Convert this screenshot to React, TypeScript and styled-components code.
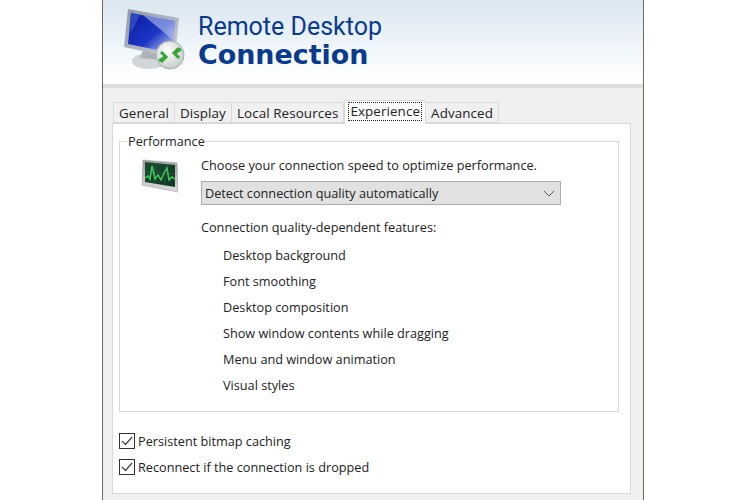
import styled, { createGlobalStyle } from 'styled-components'

const GlobalStyle = createGlobalStyle`
  html, body {
    margin: 0;
    padding: 0;
    background: #fff;
    overflow: hidden;
  }
  body {
    font-family: "Open Sans", "Liberation Sans", sans-serif;
    font-size: 12.7px;
    color: #222;
  }
`

const Page = styled.div`
  width: 745px;
  height: 500px;
  display: flex;
  justify-content: center;
  overflow: hidden;
`

const Window = styled.div`
  box-sizing: border-box;
  width: 542px;
  height: 500px;
  margin-left: 1px;
  border-left: 1px solid #6f6a5c;
  border-right: 1px solid #6f6a5c;
  background: #f0f0f0;
  display: flex;
  flex-direction: column;
`

const Banner = styled.header`
  box-sizing: border-box;
  height: 88px;
  flex: none;
  padding: 6px 0 0 20px;
  display: flex;
  gap: 11px;
  background: linear-gradient(#dbe6f0 0%, #e9f1f7 40%, #f8fbfd 75%, #ffffff 96%);
  border-bottom: 4px solid #dedede;
`

const BannerTitle = styled.div`
  display: flex;
  flex-direction: column;
  padding-top: 6px;
  color: #0a3a8e;
`

const TitleLight = styled.span`
  font-family: Roboto, sans-serif;
  font-size: 25px;
  line-height: 29px;
`

const TitleBold = styled.span`
  font-family: "DejaVu Sans", sans-serif;
  font-weight: 700;
  font-size: 26.9px;
  line-height: 28px;
`

const Body = styled.div`
  flex: 1;
  padding: 14px 12px 6px 9px;
  display: flex;
  flex-direction: column;
`

const TabBar = styled.div`
  display: flex;
  align-items: flex-end;
  height: 21px;
  padding-left: 1px;
  position: relative;
  z-index: 1;
  font-size: 13.4px;
  letter-spacing: 0.1px;
`

const Tab = styled.div<{ $active?: boolean }>`
  box-sizing: border-box;
  height: ${({ $active }) => ($active ? '24px' : '21px')};
  margin-bottom: ${({ $active }) => ($active ? '-1px' : '0')};
  padding: ${({ $active }) => ($active ? '0 3px' : '0 5px')};
  display: flex;
  align-items: ${({ $active }) => ($active ? 'flex-start' : 'center')};
  background: ${({ $active }) => ($active ? '#fff' : '#f0f0f0')};
  border: 1px solid #d9d9d9;
  border-left-width: ${({ $active }) => ($active ? '1px' : '0')};
  border-bottom-width: ${({ $active }) => ($active ? '0' : '1px')};
  white-space: nowrap;
  &:first-child {
    border-left-width: 1px;
  }
`

const TabFocus = styled.span`
  padding: 0 2px;
  margin-top: 1px;
  height: 19px;
  line-height: 18px;
  outline: 1px dotted #222;
  outline-offset: -1px;
`

const Panel = styled.div`
  box-sizing: border-box;
  flex: 1;
  background: #fff;
  border: 1px solid #d9d9d9;
  padding: 9px 11px 0 6px;
  display: flex;
  flex-direction: column;
`

const Group = styled.fieldset`
  box-sizing: border-box;
  margin: 0;
  height: 279px;
  flex: none;
  border: 1px solid #d9d9d9;
  padding: 0 0 0 20px;
  display: flex;
  gap: 23px;
`

const Legend = styled.legend`
  padding: 0 1px;
  margin-left: -13px;
  line-height: 16px;
`

const Icon = styled.svg`
  flex: none;
  margin-top: 8px;
`

const GroupBody = styled.div`
  display: flex;
  flex-direction: column;
  padding-top: 7px;
`

const Line = styled.div`
  line-height: 18px;
  white-space: nowrap;
`

const Select = styled.div`
  box-sizing: border-box;
  width: 360px;
  height: 24px;
  margin: 7px 0 13px;
  padding: 0 5px 0 3px;
  display: flex;
  align-items: center;
  justify-content: space-between;
  background: #e1e1e1;
  border: 1px solid #adadad;
`

const FeatureList = styled.ul`
  list-style: none;
  margin: 10px 0 0;
  padding: 0 0 0 22px;
  display: flex;
  flex-direction: column;
  gap: 8px;
`

const Feature = styled.li`
  line-height: 18px;
`

const Checks = styled.div`
  margin-top: 21px;
  display: flex;
  flex-direction: column;
  gap: 10px;
`

const CheckRow = styled.div`
  display: flex;
  align-items: center;
  gap: 3px;
  height: 16px;
  white-space: nowrap;
`

const CheckBox = styled.span`
  box-sizing: border-box;
  width: 16px;
  height: 16px;
  flex: none;
  border: 1px solid #333;
  background: #fff;
  display: flex;
  align-items: center;
  justify-content: center;
`

const features = [
  'Desktop background',
  'Font smoothing',
  'Desktop composition',
  'Show window contents while dragging',
  'Menu and window animation',
  'Visual styles',
]

const RemoteLogo = () => (
  <svg width="64" height="68" viewBox="0 0 64 68">
    <defs>
      <linearGradient id="scr" x1="0" y1="0" x2="1" y2="1">
        <stop offset="0" stopColor="#0b1c9a" />
        <stop offset="0.55" stopColor="#1a35c4" />
        <stop offset="1" stopColor="#dfe5f7" />
      </linearGradient>
      <linearGradient id="bez" x1="0" y1="0" x2="1" y2="1">
        <stop offset="0" stopColor="#8e99a8" />
        <stop offset="1" stopColor="#c9cfd6" />
      </linearGradient>
      <radialGradient id="orb" cx="0.4" cy="0.35" r="0.7">
        <stop offset="0" stopColor="#ffffff" />
        <stop offset="1" stopColor="#c2cac6" />
      </radialGradient>
    </defs>
    <ellipse cx="26" cy="55" rx="17" ry="8" fill="#d3d6d8" />
    <path d="M20 44 L36 47 L38 54 L17 52 Z" fill="#aeb2b6" />
    <path d="M5 3 L56 12 L52 52 L1 41 Z" fill="url(#bez)" />
    <path d="M8 7 L52 15 L49 47 L5 38 Z" fill="url(#scr)" />
    <path d="M20 9 L52 15 L50 34 Z" fill="#c4d0f2" opacity="0.55" />
    <path d="M8 7 L17 9 L7 28 Z" fill="#3c56d0" opacity="0.7" />
    <circle cx="47" cy="49" r="14" fill="url(#orb)" stroke="#a8aeac" />
    <path d="M38 46 L43 51 L38 56 M36 55 L42 51" fill="none" stroke="#35a535" strokeWidth="3" />
    <path d="M56 42 L51 47 L56 52 M58 43 L52 47" fill="none" stroke="#35a535" strokeWidth="3" />
  </svg>
)

const PerformanceIcon = () => (
  <Icon width="38" height="38" viewBox="0 0 38 38">
    <defs>
      <linearGradient id="perfBezel" x1="0" y1="0" x2="0" y2="1">
        <stop offset="0" stopColor="#9aa09c" />
        <stop offset="1" stopColor="#dcdedd" />
      </linearGradient>
      <linearGradient id="perfScreen" x1="0" y1="0" x2="1" y2="1">
        <stop offset="0" stopColor="#1d4a33" />
        <stop offset="1" stopColor="#123a26" />
      </linearGradient>
    </defs>
    <path d="M3 3 L37 6 L38 35 L2 28 Z" fill="url(#perfBezel)" stroke="#9a9e9c" strokeWidth="0.6" />
    <path d="M5 5 L35 8 L35 30 L5 25 Z" fill="url(#perfScreen)" />
    <path d="M5 15 L35 17 M15 6 L15 27 M25 7 L25 29" stroke="#2f6a48" strokeWidth="0.5" />
    <path
      d="M5 21 L8 19 L10 22 L12 9 L15 22 L18 18 L21 23 L24 16 L27 11 L29 23 L32 20 L35 22"
      fill="none"
      stroke="#3fd25a"
      strokeWidth="1.4"
    />
  </Icon>
)

const App = () => (
  <Page>
    <GlobalStyle />
    <Window>
      <Banner>
        <RemoteLogo />
        <BannerTitle>
          <TitleLight>Remote Desktop</TitleLight>
          <TitleBold>Connection</TitleBold>
        </BannerTitle>
      </Banner>
      <Body>
        <TabBar>
          <Tab>General</Tab>
          <Tab>Display</Tab>
          <Tab>Local Resources</Tab>
          <Tab $active>
            <TabFocus>Experience</TabFocus>
          </Tab>
          <Tab>Advanced</Tab>
        </TabBar>
        <Panel>
          <Group>
            <Legend>Performance</Legend>
            <PerformanceIcon />
            <GroupBody>
              <Line>Choose your connection speed to optimize performance.</Line>
              <Select>
                Detect connection quality automatically
                <svg width="12" height="7" viewBox="0 0 12 7">
                  <path d="M1 1 L6 6 L11 1" fill="none" stroke="#555" />
                </svg>
              </Select>
              <Line>Connection quality-dependent features:</Line>
              <FeatureList>
                {features.map((f) => (
                  <Feature key={f}>{f}</Feature>
                ))}
              </FeatureList>
            </GroupBody>
          </Group>
          <Checks>
            {['Persistent bitmap caching', 'Reconnect if the connection is dropped'].map((label) => (
              <CheckRow key={label}>
                <CheckBox>
                  <svg width="12" height="10" viewBox="0 0 12 10">
                    <path d="M1 5 L4.5 8.5 L11 1" fill="none" stroke="#444" strokeWidth="1.2" />
                  </svg>
                </CheckBox>
                {label}
              </CheckRow>
            ))}
          </Checks>
        </Panel>
      </Body>
    </Window>
  </Page>
)

export default App
